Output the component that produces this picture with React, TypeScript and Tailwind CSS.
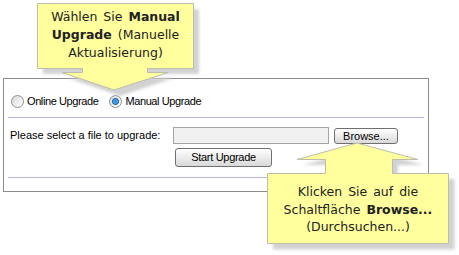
import React from 'react';

const Radio: React.FC<{ checked?: boolean }> = ({ checked }) => (
    <span className="w-[13px] h-[13px] rounded-full border border-[#8f8f8f] bg-gradient-to-br from-[#d8d8d8] to-white flex items-center justify-center shrink-0">
        {checked && (
            <span className="w-[7px] h-[7px] rounded-full bg-[#2a8be0] border border-[#0b4f9c] shadow-[inset_0_0_2px_#bfe6ff]" />
        )}
    </span>
);

const Btn: React.FC<{ label: string; className: string }> = ({ label, className }) => (
    <button className={`flex items-center justify-center rounded-[3px] border border-[#707070] bg-gradient-to-b from-white to-[#d9d9d9] text-[11px] text-black leading-none ${className}`}>
        {label}
    </button>
);

export default function App() {
    return (
        <div className="relative w-[459px] h-[255px] bg-white overflow-hidden font-['Liberation_Sans',Arial,sans-serif]">
            {/* Panel */}
            <div className="pt-[78px] pl-[3px]">
                <div className="w-[426px] h-[114px] border border-[#8c8c8c] bg-white">
                    <div className="mt-[16px] h-[13px] pl-[7px] flex items-center text-[11px] text-black tracking-[-0.4px]">
                        <Radio />
                        <span className="ml-[3px]">Online Upgrade</span>
                        <span className="ml-[11px]"><Radio checked /></span>
                        <span className="ml-[3px]">Manual Upgrade</span>
                    </div>
                    <div className="mt-[9px] mx-[4px] h-px bg-[#b6b6dc]" />
                    <div className="mt-[9px] flex">
                        <div className="w-[169px] pl-[6px] h-[17px] flex items-center text-[11px] text-black">
                            Please select a file to upgrade:
                        </div>
                        <div className="w-[156px] h-[17px] border border-[#a5a5a5] bg-[#f0f0f0]" />
                        <Btn label="Browse..." className="ml-[5px] mt-px w-[64px] h-[16px]" />
                    </div>
                    <Btn label="Start Upgrade" className="mt-[4px] ml-[171px] w-[97px] h-[19px] tracking-[-0.3px]" />
                    <div className="mt-[10px] mx-[4px] h-px bg-[#b6b6dc]" />
                </div>
            </div>

            {/* Callout shapes */}
            <svg className="absolute left-0 top-0 pointer-events-none" width="459" height="255">
                <defs>
                    <filter id="blur" x="-10%" y="-10%" width="120%" height="120%">
                        <feGaussianBlur stdDeviation="1.5" />
                    </filter>
                </defs>
                <g fill="#d2d2d2" filter="url(#blur)">
                    <path d="M43,9 H199 V74 H153 V78 H174 L120,96 L68,78 H88 V74 H43 Z" />
                    <path d="M273,179 H331 V165 H303 L363,149 L424,165 H398 V179 H454.5 V249.5 H273 Z" />
                </g>
                <g fill="#ffff9e" stroke="#bdbdab" strokeWidth="1">
                    <path d="M37.5,3.5 H193.5 V68.5 H147.5 V72.5 H168 L114,90 L62,72.5 H82.5 V68.5 H37.5 Z" />
                    <path d="M267.5,173.5 H325.5 V159.5 H297 L357,143 L418,159.5 H392.5 V173.5 H448.5 V243.5 H267.5 Z" />
                </g>
            </svg>

            {/* Callout texts */}
            <div className="absolute left-[38px] top-[8px] w-[155px] flex flex-col items-center text-[12.5px] leading-[18px] text-[#222] font-['DejaVu_Sans',Verdana,sans-serif] [word-spacing:2px]">
                <span>Wählen Sie <b>Manual</b></span>
                <span><b>Upgrade</b> (Manuelle</span>
                <span>Aktualisierung)</span>
            </div>
            <div className="absolute left-[268px] top-[183px] w-[180px] flex flex-col items-center text-[12.5px] leading-[17.5px] text-[#222] font-['DejaVu_Sans',Verdana,sans-serif] [word-spacing:2px]">
                <span>Klicken Sie auf die</span>
                <span>Schaltfläche <b>Browse...</b></span>
                <span>(Durchsuchen...)</span>
            </div>
        </div>
    );
}
